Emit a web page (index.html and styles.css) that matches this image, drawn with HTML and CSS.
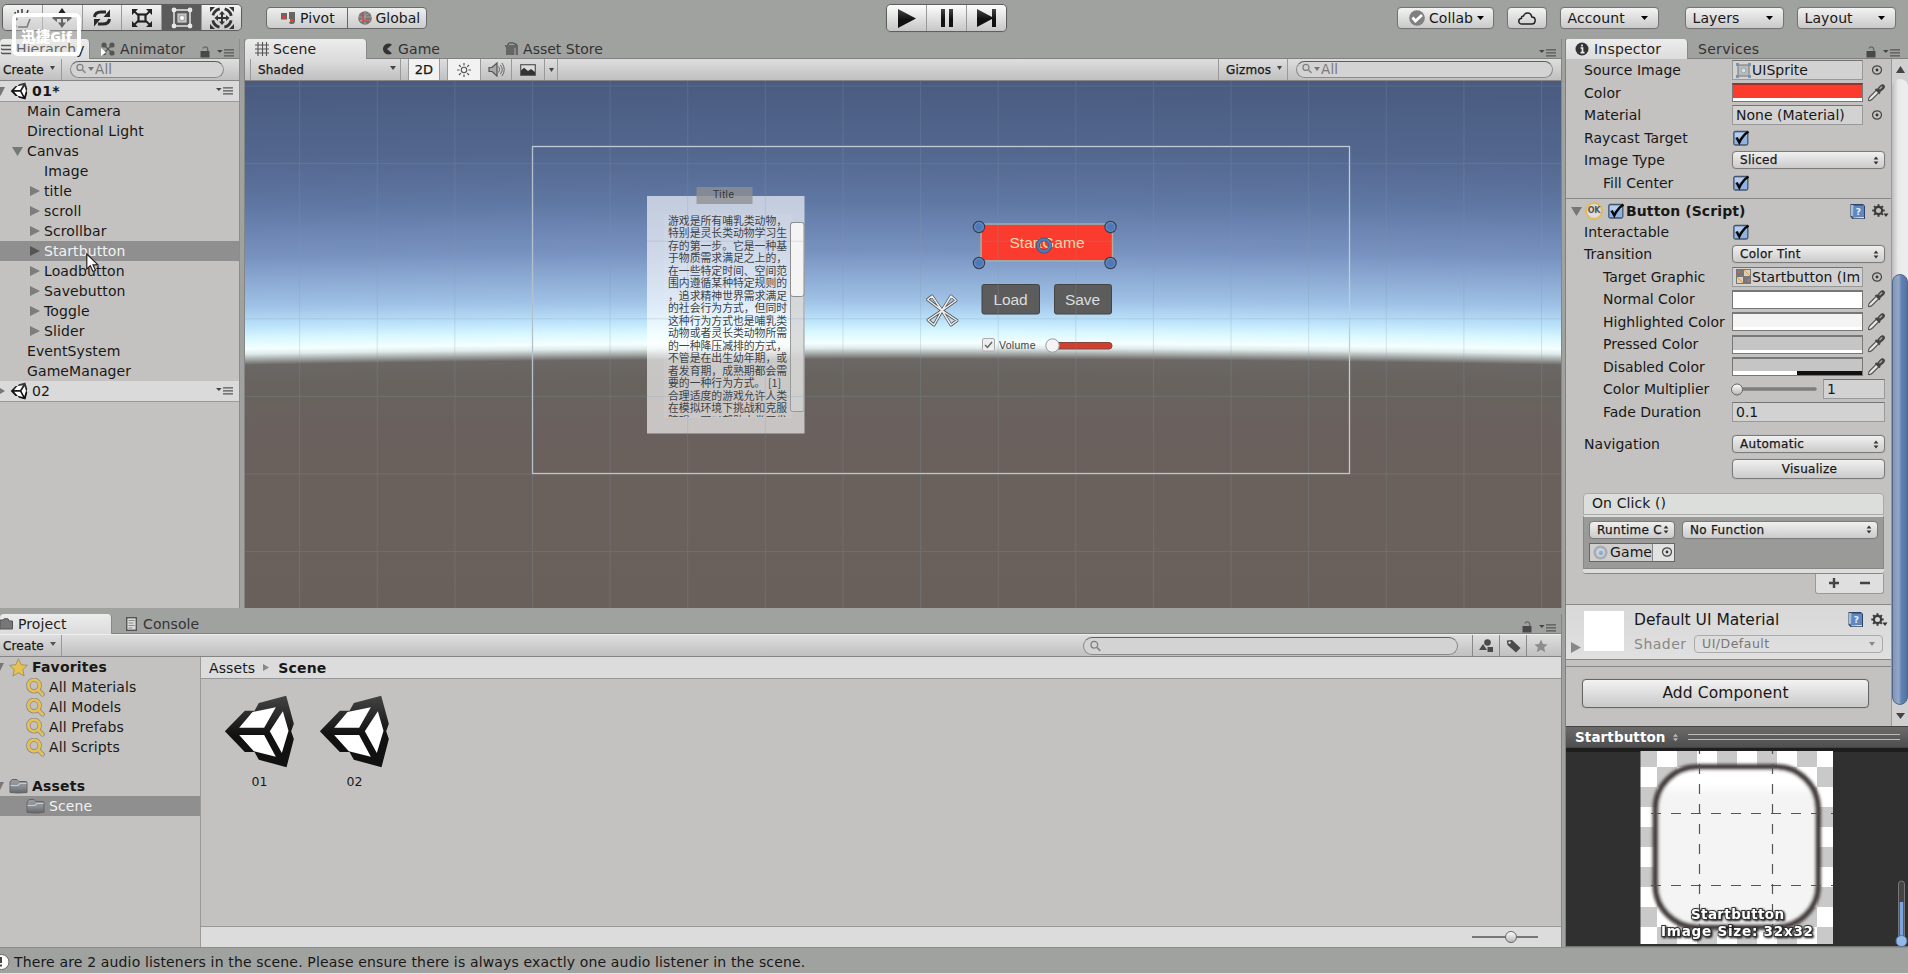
FILE: index.html
```html
<!DOCTYPE html>
<html lang="en">
<head>
<meta charset="utf-8">
<title>Scene editor</title>
<link rel="stylesheet" href="styles.css">
</head>
<body>
<svg class="defs" width="0" height="0">
  <defs>
    <linearGradient id="dark" x1="0" y1="0" x2="0" y2="1"><stop offset="0" stop-color="#444"/><stop offset=".55" stop-color="#111"/></linearGradient>
    <linearGradient id="knob" x1="0" y1="0" x2="0" y2="1"><stop offset="0" stop-color="#fff"/><stop offset="1" stop-color="#b5b5b5"/></linearGradient>
    <linearGradient id="folderfill" x1="0" y1="0" x2="0" y2="1"><stop offset="0" stop-color="#999b9d"/><stop offset=".5" stop-color="#8b9098"/><stop offset="1" stop-color="#666"/></linearGradient>
    <radialGradient id="ball"><stop offset="0" stop-color="#4d78ba"/><stop offset=".6" stop-color="#5279b4"/><stop offset="1" stop-color="#87a7d6"/></radialGradient>
    <symbol id="unity" viewBox="670 298 218 225">
      <path fill="url(#dark)" d="M675 410 735 348H764L777 325 859 303 882 387 874 410 882 433 860 518 777 495 764 472H735Z"/>
      <path fill="#fff" d="M718 399 758 352 828 338 793 399ZM718 421H793L828 486 762 470ZM849 350 866 408 846 475 810 410Z"/>
    </symbol>
    <symbol id="menu" viewBox="0 0 18 8"><path d="M0 1h5.600L2.800 4Z" fill="#444"/><path d="M7 .8h10M7 3.800h10M7 6.800h10" stroke="#555" stroke-width="1.300"/></symbol>
    <symbol id="lock" viewBox="0 0 10 12"><path d="M.5 5h9v6.500h-9Z" fill="#484848"/><path d="M7.700 5V3Q7.300 .8 5.300 .8 3.500 .8 3 2.500" fill="none" stroke="#666" stroke-width="1.300"/></symbol>
    <symbol id="tri" viewBox="0 0 10 10"><path d="M0 0 10 5 0 10Z" fill="currentColor"/></symbol>
    <symbol id="down" viewBox="0 0 10 10"><path d="M0 0H10L5 10Z" fill="currentColor"/></symbol>
    <symbol id="updn" viewBox="0 0 6 9"><path d="M.6 3.600 3 .4 5.400 3.600ZM.6 5.400 3 8.600 5.400 5.400Z" fill="#333"/></symbol>
    <symbol id="target" viewBox="0 0 12 10"><ellipse cx="6" cy="5" rx="4.500" ry="4.200" fill="none" stroke="#444" stroke-width="1.200"/><circle cx="6" cy="5" r="1.400" fill="#333"/></symbol>
    <symbol id="drop" viewBox="0 0 18 18"><path d="M1.500 16.500Q1 14.500 3 12.500L9.500 6 12 8.500 5.500 15Q3.500 17 1.500 16.500Z" fill="#e6e6e6" stroke="#555" stroke-width="1.100"/><path d="M8.500 5 13 9.500M10.500 5.800 13.500 2.300Q15.500 .4 16.700 1.700 17.700 3 16 4.700L12.300 7.800Z" fill="#555" stroke="#444" stroke-width="1.800"/><path d="m12.500 5 2.500-2.500" stroke="#aaa" stroke-width="1.300"/></symbol>
    <symbol id="check" viewBox="0 0 17 16"><rect x=".8" y="1.500" width="14" height="13.500" rx="1.500" fill="#8fb3e2" stroke="#47566e" stroke-width="1.300"/><path d="M2 8V2.800H14V6Z" fill="#b4cdec"/><path d="M3.500 7.500 6.300 12.500Q9.500 5.500 15.500 1.500" fill="none" stroke="#080808" stroke-width="2.500"/></symbol>
    <symbol id="book" viewBox="0 0 17 17"><path d="M1.500 1H14L16 3V16H3.500L1.500 14Z" fill="#2f4464"/><path d="M4 2.500H15V13.500L5 14.500Z" fill="#5f88c0"/><path d="M2 2H4.500V14L2 12.800Z" fill="#a9bdd8"/><path d="m3.500 14.500 11.500-.7v1.500H4.500Z" fill="#ddd"/><text x="9.300" y="11.500" font-family="DejaVu Sans" font-weight="bold" font-size="9" text-anchor="middle" fill="#e8f0fa">?</text></symbol>
    <symbol id="gear" viewBox="0 0 17 14"><circle cx="6.500" cy="6.500" r="3.600" fill="none" stroke="#3b3b3b" stroke-width="2.200"/><path d="M6.500 .3V3M6.500 10V12.700M.3 6.500H3M10 6.500H12.700M2.100 2.100 4 4M9 9 10.900 10.900M2.100 10.900 4 9M9 4 10.900 2.100" stroke="#3b3b3b" stroke-width="2"/><path d="M11.500 9.500h5L14 13Z" fill="#333"/></symbol>
    <symbol id="mag" viewBox="0 0 13 12"><circle cx="4.700" cy="4.700" r="3.600" fill="none" stroke="#7d7d7d" stroke-width="1.400"/><path d="m7.200 7.200 4 4" stroke="#8a8a8a" stroke-width="1.900"/></symbol>
    <symbol id="fav" viewBox="0 0 19 19"><g fill="none" stroke="#8c8c8c" stroke-width="4.400" stroke-linecap="round"><circle cx="8" cy="7.600" r="5.700"/><path d="m12.300 12 4.300 4.400"/></g><g fill="none" stroke="#e8c14f" stroke-width="2.800" stroke-linecap="round"><circle cx="8" cy="7.600" r="5.700"/><path d="m12.300 12 4.300 4.400"/></g></symbol>
    <symbol id="folder" viewBox="0 0 19 16"><path d="M1 14.500V4L3 1.500H8L10 3.500H17Q18 3.500 18 5V14.500Q9 15.500 1 14.500Z" fill="url(#folderfill)" stroke="#656565"/><path d="M1.500 7.500H9L11 5.500H17.500" fill="none" stroke="#c9cdd1" stroke-width="1.100"/></symbol>
    <symbol id="star" viewBox="0 0 20 20"><path d="M10 .8 12.800 7 19.400 7.700 14.500 12.200 15.900 18.900 10 15.500 4.100 18.900 5.500 12.200 .6 7.700 7.200 7Z" fill="currentColor" stroke="#8f8461" stroke-width=".8"/></symbol>
  </defs>
</svg>

<div class="app">
  <header class="topbar">
    <div class="tools">
      <span class="tool"><svg width="22" height="22" viewBox="0 0 22 22" fill="none" stroke="#444" stroke-width="1.600"><path d="M5 20 2 12Q3 9 6 13L4 5M7 10 7 3M11 9V2M15 10 17 3M19 12 16 20H7"/></svg></span>
      <span class="tool"><svg width="22" height="22" viewBox="0 0 22 22" fill="#222"><path d="M11 1 15 6.500H7ZM11 21 15 15.500H7ZM1 11 6 7V10H16V7L21 11 16 15V12H6V15Z"/><path d="M10 6h2v10h-2Z"/></svg></span>
      <span class="tool"><svg width="20" height="18" viewBox="0 0 20 18"><path d="M2.500 8Q3 3 9 3H14M17.500 10Q17 15 11 15H6" fill="none" stroke="#292929" stroke-width="3"/><path d="M18 .5V8H11.500ZM2 17.500V10H8.500Z" fill="#292929"/></svg></span>
      <span class="tool"><svg width="22" height="20" viewBox="0 0 22 20"><rect x="7.500" y="6.500" width="7" height="7" fill="none" stroke="#222" stroke-width="2.200"/><path d="M1 1H7L1 7ZM21 1H15L21 7ZM1 19H7L1 13ZM21 19H15L21 13Z" fill="#222"/><path d="m3 3 4 4M19 3l-4 4M3 17l4-4M19 17l-4-4" stroke="#222" stroke-width="1.800"/></svg></span>
      <span class="tool on"><svg width="22" height="22" viewBox="0 0 22 22"><rect x="3" y="3" width="16" height="16" fill="none" stroke="#ddd" stroke-width="1.600"/><rect x="7" y="7" width="8" height="8" fill="#aaa" stroke="#ddd"/><circle cx="11" cy="11" r="2" fill="#fff"/><g fill="#e8e8e8"><circle cx="3" cy="3" r="2.400"/><circle cx="19" cy="3" r="2.400"/><circle cx="3" cy="19" r="2.400"/><circle cx="19" cy="19" r="2.400"/></g></svg></span>
      <span class="tool"><svg width="26" height="24" viewBox="0 0 26 24"><circle cx="13" cy="12" r="9.500" fill="none" stroke="#333" stroke-width="2.800" stroke-dasharray="9.900 5" stroke-dashoffset="-2.500"/><path d="M13 5 16 8.500H14V11H17V9L20.500 12 17 15V13H14V15.500H16L13 19 10 15.500H12V13H9V15L5.500 12 9 9V11H12V8.500H10Z" fill="#333"/><path d="M1 1H6L1 6ZM25 1H20L25 6ZM1 23H6L1 18ZM25 23H20L25 18Z" fill="#333"/></svg></span>
    </div>
    <div class="group pivot">
      <span class="gbtn"><svg width="14" height="12" viewBox="0 0 14 12"><rect y="1" width="6" height="6.500" fill="#666"/><path d="M8 0h6v9q0 3-3 3-3 0-3-2h3V7H8Z" fill="#666"/><circle cx="3" cy="5" r="1.800" fill="#e33"/><path d="M9 7h3v3H9Z" fill="#d43"/></svg>Pivot</span>
      <span class="gbtn"><svg width="14" height="14" viewBox="0 0 14 14"><circle cx="7" cy="7" r="6.800" fill="#777"/><path d="M3 11Q4 5 11 2.500M1 6h12M7 1v12M2 9.500h10" fill="none" stroke="#aaa" stroke-width=".8"/><path d="M5 3v7h6" fill="none" stroke="#d44" stroke-width="1.500"/></svg>Global</span>
    </div>
    <div class="play">
      <span><svg width="19" height="19" viewBox="0 0 19 19"><path d="M1 0 19 9.500 1 19Z" fill="url(#dark)"/></svg></span>
      <span><svg width="12" height="18" viewBox="0 0 12 18"><path d="M0 0h4v18H0ZM8 0h4v18H8Z" fill="url(#dark)"/></svg></span>
      <span><svg width="19" height="18" viewBox="0 0 19 18"><path d="M0 0 15 8V0h4v18h-4V10L0 18Z" fill="url(#dark)"/></svg></span>
    </div>
    <div class="topright">
      <span class="tb collab"><svg width="16" height="16" viewBox="0 0 16 16"><circle cx="8" cy="8" r="7.800" fill="#808080"/><path d="m3.500 7.500 3 3.500 6.500-6" fill="none" stroke="#fff" stroke-width="2.700"/></svg>Collab<svg class="dn" width="7" height="4"><path d="M0 0H7L3.500 4Z"/></svg></span>
      <span class="tb cloud"><svg width="18" height="13" viewBox="0 0 18 13"><path d="M4 12Q.8 12 .8 9.200.8 6.800 3.500 6.300 3.300 4 5.500 4 6.500 1 9.800 1 13 1 13.800 5 17.200 5 17.200 8.500 17 12 14 12Z" fill="none" stroke="#222" stroke-width="1.500"/></svg></span>
      <span class="tb wide">Account<svg class="dn" width="7" height="4"><path d="M0 0H7L3.500 4Z"/></svg></span>
      <span class="tb wide lay">Layers<svg class="dn" width="7" height="4"><path d="M0 0H7L3.500 4Z"/></svg></span>
      <span class="tb wide">Layout<svg class="dn" width="7" height="4"><path d="M0 0H7L3.500 4Z"/></svg></span>
    </div>
  </header>

  <div class="work">
    <div class="main">
      <div class="upper">
        <section class="hier">
          <div class="tabs">
            <span class="tab act t-hier"><svg width="11" height="11" viewBox="0 0 11 11"><path d="M1 1.500h10M2 5.500h9M2 9.500h9M1 5h1M1 9h1" stroke="#555" stroke-width="1.500"/></svg>Hierarchy</span>
            <span class="tab t-anim"><svg width="14" height="14" viewBox="0 0 14 14" fill="#555"><circle cx="3" cy="3" r="2.600"/><circle cx="11" cy="3" r="2.600"/><circle cx="11" cy="11" r="2.600"/><circle cx="3" cy="11" r="2.300"/><path d="m4 4 7 7M11 3 4 10" stroke="#555" stroke-width="1.300"/><path d="M0 6 5 10.500 0 14Z" fill="#fff"/></svg>Animator</span>
            <svg class="lk" width="10" height="12"><use href="#lock"/></svg><svg class="mn" width="18" height="8"><use href="#menu"/></svg>
          </div>
          <div class="bar">
            <span class="create">Create<svg width="5" height="4"><path d="M0 0H5L2.500 4Z" fill="#444"/></svg></span>
            <span class="search"><svg width="11" height="11"><use href="#mag"/></svg><svg width="6" height="4"><path d="M0 0H6L3 4Z" fill="#777"/></svg>All</span>
          </div>
          <div class="scenehead"><svg class="fold" width="9" height="9"><use href="#down" width="9" height="9"/></svg><svg width="18" height="18"><use href="#unity"/></svg><b>01*</b><svg class="mn2" width="18" height="8"><use href="#menu"/></svg></div>
          <div class="tree">
            <div class="row">Main Camera</div>
            <div class="row">Directional Light</div>
            <div class="row"><svg class="c" width="11" height="9"><path d="M0 0H11L5.500 9Z" fill="#777"/></svg>Canvas</div>
            <div class="row in">Image</div>
            <div class="row in"><svg class="a" width="10" height="10"><use href="#tri"/></svg>title</div>
            <div class="row in"><svg class="a" width="10" height="10"><use href="#tri"/></svg>scroll</div>
            <div class="row in"><svg class="a" width="10" height="10"><use href="#tri"/></svg>Scrollbar</div>
            <div class="row in sel"><svg class="a" width="10" height="10"><use href="#tri"/></svg>Startbutton</div>
            <div class="row in"><svg class="a" width="10" height="10"><use href="#tri"/></svg>Loadbutton</div>
            <div class="row in"><svg class="a" width="10" height="10"><use href="#tri"/></svg>Savebutton</div>
            <div class="row in"><svg class="a" width="10" height="10"><use href="#tri"/></svg>Toggle</div>
            <div class="row in"><svg class="a" width="10" height="10"><use href="#tri"/></svg>Slider</div>
            <div class="row">EventSystem</div>
            <div class="row">GameManager</div>
          </div>
          <div class="scenehead two"><svg class="fold" width="5" height="6"><path d="M0 0 5 3 0 6Z" fill="#777"/></svg><svg width="18" height="18"><use href="#unity"/></svg><span>02</span><svg class="mn2" width="18" height="8"><use href="#menu"/></svg></div>
        </section>

        <section class="scene">
          <div class="tabs">
            <span class="tab act t-scene"><svg width="14" height="14" viewBox="0 0 14 14"><path d="M3 0v14M7.500 0v14M11.500 0v14M0 3h14M0 7h14M0 11h14" stroke="#555" stroke-width="1.100"/></svg>Scene</span>
            <span class="tab t-game"><svg width="12" height="12" viewBox="0 0 12 12"><path d="M11 1.800 6 6 11 10.200A5.500 5.500 0 1 1 11 1.800Z" fill="#333"/></svg>Game</span>
            <span class="tab t-store"><svg width="14" height="14" viewBox="0 0 14 14"><path d="M1 5H13V13H1ZM0 3h13v2H0Z" fill="#666"/><path d="M10 6v7" stroke="#aaa"/><path d="M3 3q0-2.500 3-2 2-.5 4 1l2 1" fill="none" stroke="#555" stroke-width="1.400"/></svg>Asset Store</span>
            <svg class="mn" width="18" height="8"><use href="#menu"/></svg>
          </div>
          <div class="bar">
            <span class="shaded">Shaded<svg width="6" height="4"><path d="M0 0H6L3 4Z" fill="#444"/></svg></span>
            <span class="cell twod">2D</span>
            <span class="cell sun"><svg width="16" height="14" viewBox="0 0 16 14"><circle cx="8" cy="7" r="2.700" fill="none" stroke="#555" stroke-width="1.100"/><path d="M8 0v2.500M8 11.500V14M1 7h2.500M12.500 7H15M3 2l1.800 1.800M13 2l-1.800 1.800M3 12l1.800-1.800M13 12l-1.800-1.800" stroke="#555" stroke-width="1.200"/></svg></span>
            <span class="cell spk"><svg width="17" height="15" viewBox="0 0 17 15"><path d="M1 5.500h3L9 1v13L4 9.500H1Z" fill="#aaa" stroke="#555" stroke-width="1.200"/><path d="M10.500 4.500q2.500 3 0 6M12.300 3q4 4.500 0 9M14 1q4.500 6.500 0 13" fill="none" stroke="#666"/></svg></span>
            <span class="cell pic"><svg width="16" height="12" viewBox="0 0 16 12"><rect x=".7" y=".7" width="14.600" height="10.600" fill="#ddd" stroke="#555" stroke-width="1.200"/><path d="M1 11V6.500L4 3.800 8 7 11 5 15 8V11Z" fill="#333"/></svg></span>
            <span class="cell pdn"><svg width="5" height="4"><path d="M0 0H5L2.500 4Z" fill="#444"/></svg></span>
            <span class="giz">Gizmos<svg width="5" height="4"><path d="M0 0H5L2.500 4Z" fill="#444"/></svg></span>
            <span class="search big"><svg width="11" height="11"><use href="#mag"/></svg><svg width="6" height="4"><path d="M0 0H6L3 4Z" fill="#777"/></svg>All</span>
          </div>
          <div class="view">
          <svg width="1317" height="527" viewBox="245 81 1317 527">
            <defs><clipPath id="clip"><rect x="660" y="200" width="130" height="217"/></clipPath>
            <pattern id="grid" x="299.100" y="85.500" width="77.620" height="77.600" patternUnits="userSpaceOnUse"><path d="M.5 0V77.600M0 .5H77.620" stroke="#8098a8" stroke-opacity=".25" stroke-width="1"/></pattern></defs>
            <rect x="532.500" y="146.500" width="817" height="327" fill="none" stroke="#c3ccd6" stroke-width="1.300"/>
            <rect x="647" y="196" width="157.500" height="237.500" fill="#fff" fill-opacity=".63"/>
            <rect x="664" y="214" width="129" height="204" fill="#fff" fill-opacity=".07"/>
            <rect x="696.500" y="187" width="56" height="17" fill="#8e9092" fill-opacity=".8"/>
            <text x="713" y="197.500" class="ui" font-size="10" fill="#333" textLength="21">Title</text>
            <g clip-path="url(#clip)" class="cjk">
              <text x="668" y="224.500">游戏是所有哺乳类动物，</text>
              <text x="668" y="237">特别是灵长类动物学习生</text>
              <text x="668" y="249.500">存的第一步。它是一种基</text>
              <text x="668" y="262">于物质需求满足之上的，</text>
              <text x="668" y="274.500">在一些特定时间、空间范</text>
              <text x="668" y="287">围内遵循某种特定规则的</text>
              <text x="668" y="299.500">，追求精神世界需求满足</text>
              <text x="668" y="312">的社会行为方式，但同时</text>
              <text x="668" y="324.500">这种行为方式也是哺乳类</text>
              <text x="668" y="337">动物或者灵长类动物所需</text>
              <text x="668" y="349.500">的一种降压减排的方式，</text>
              <text x="668" y="362">不管是在出生幼年期，或</text>
              <text x="668" y="374.500">者发育期，成熟期都会需</text>
              <text x="668" y="387">要的一种行为方式。 [1]</text>
              <text x="668" y="399.500">合理适度的游戏允许人类</text>
              <text x="668" y="412">在模拟环境下挑战和克服</text>
              <text x="668" y="424.500">障碍，可以帮助人类开发</text>
            </g>
            <rect x="790.500" y="222.500" width="13.500" height="189" rx="2" fill="#d2d2d2" fill-opacity=".75" stroke="#999"/>
            <rect x="790.500" y="222.500" width="13.500" height="74" rx="2.500" fill="#f4f4f4" stroke="#8d8d8d"/>
            <rect x="982" y="225" width="130" height="35" fill="#fa3b2e"/>
            <rect x="981" y="224" width="131.500" height="37" fill="none" stroke="#b5aa9c" stroke-width="1.400"/>
            <text x="1009.500" y="248" class="ui" font-size="15.500" fill="#f3dcb0" textLength="75">StartGame</text>
            <g fill="#5c5c5c" stroke="#444"><rect x="982" y="284.500" width="57.500" height="29.500" rx="2"/><rect x="1054.500" y="284.500" width="57" height="29.500" rx="2"/></g>
            <text x="993.500" y="305" class="ui" font-size="15.500" fill="#ddd" textLength="34">Load</text>
            <text x="1065" y="305" class="ui" font-size="15.500" fill="#ddd" textLength="35">Save</text>
            <rect x="982.500" y="338.500" width="12" height="12.500" rx="1.500" fill="#eee" stroke="#aaa"/>
            <path d="m985 345 2.500 2.500 4.500-5.500" fill="none" stroke="#666" stroke-width="1.500"/>
            <text x="999" y="348.500" class="ui" font-size="10.500" fill="#444" textLength="36.500">Volume</text>
            <rect x="1050" y="342.500" width="62" height="6.500" rx="3" fill="#d0402f" stroke="#84453c"/>
            <circle cx="1052.500" cy="345.500" r="6.700" fill="#f4f4f4" stroke="#999"/>
            <rect x="244" y="80" width="1318" height="528" fill="url(#grid)"/>
            <g stroke="#333d55" stroke-width="1.200" fill="url(#ball)"><circle cx="979" cy="227" r="5.600"/><circle cx="1110.500" cy="227" r="5.600"/><circle cx="979" cy="263" r="5.600"/><circle cx="1110.500" cy="263" r="5.600"/></g>
            <circle cx="1044" cy="245.500" r="6" fill="none" stroke="#41506e" stroke-width="4"/><circle cx="1044" cy="245.500" r="6" fill="none" stroke="#527ab5" stroke-width="2.500"/>
            <g fill="none" stroke-linejoin="round"><path d="M942 310.500 927.500 299.500 932 296ZM942 310.500 951 296 956 300.500ZM942 310.500 957 320.500 951 325ZM942 310.500 934 325 928 320Z" stroke="#555" stroke-width="3"/><path d="M942 310.500 927.500 299.500 932 296ZM942 310.500 951 296 956 300.500ZM942 310.500 957 320.500 951 325ZM942 310.500 934 325 928 320Z" stroke="#eee" stroke-width="1.500"/></g>
          </svg>
          </div>
        </section>
      </div>

      <section class="project">
        <div class="tabs">
          <span class="tab act t-proj"><svg width="13" height="12" viewBox="0 0 13 12"><path d="M0 11V2H3L4 .8H8L9.500 3H12.500V11Z" fill="#777" stroke="#555"/></svg>Project</span>
          <span class="tab t-con"><svg width="11" height="14" viewBox="0 0 11 14"><rect x=".7" y=".7" width="9.600" height="12.600" fill="#ddd" stroke="#555" stroke-width="1.400"/><path d="M2.500 3.500h6M2.500 6h5M2.500 8.500h6M2.500 11h4" stroke="#888"/></svg>Console</span>
          <svg class="lk" width="10" height="12"><use href="#lock"/></svg><svg class="mn" width="18" height="8"><use href="#menu"/></svg>
        </div>
        <div class="bar pbar">
          <span class="create">Create<svg width="6" height="4"><path d="M0 0H6L3 4Z" fill="#555"/></svg></span>
          <span class="search psearch"><svg width="12" height="12"><use href="#mag"/></svg></span>
          <span class="ic"><svg width="15" height="14" viewBox="0 0 15 14" fill="#4a4a4a"><circle cx="8.500" cy="3.500" r="3.300"/><path d="M4 5 8 11H0ZM8.500 8H14V13H8.500Z"/></svg></span>
          <span class="ic"><svg width="15" height="14" viewBox="0 0 15 14"><path d="M.8 1.500 6 1 14.500 9 10 13.500 1.500 6Z" fill="#4a4a4a"/><circle cx="3.600" cy="3.600" r="1.200" fill="#ddd"/></svg></span>
          <span class="ic st"><svg width="14" height="14" viewBox="0 0 20 20"><path d="M10 .8 12.800 7 19.400 7.700 14.500 12.200 15.900 18.900 10 15.500 4.100 18.900 5.500 12.200 .6 7.700 7.200 7Z" fill="#8d8d8d"/></svg></span>
        </div>
        <div class="pbody">
          <aside class="ptree">
            <div class="prow b"><svg class="pf" width="9" height="9"><use href="#down" width="9" height="9"/></svg><svg class="i1" style="color:#e6c350" width="19" height="19"><use href="#star"/></svg>Favorites</div>
            <div class="prow s"><svg width="19" height="19"><use href="#fav"/></svg>All Materials</div>
            <div class="prow s"><svg width="19" height="19"><use href="#fav"/></svg>All Models</div>
            <div class="prow s"><svg width="19" height="19"><use href="#fav"/></svg>All Prefabs</div>
            <div class="prow s"><svg width="19" height="19"><use href="#fav"/></svg>All Scripts</div>
            <div class="prow b as"><svg class="pf" width="9" height="9"><use href="#down" width="9" height="9"/></svg><svg class="i1" width="19" height="16"><use href="#folder"/></svg>Assets</div>
            <div class="prow s sel"><svg width="19" height="16"><use href="#folder"/></svg>Scene</div>
          </aside>
          <div class="pmain">
            <div class="crumb">Assets<svg width="6" height="7"><path d="M0 0 6 3.500 0 7Z" fill="#888"/></svg><b>Scene</b></div>
            <div class="files">
              <div class="file"><svg width="73" height="75" viewBox="0 0 73 75"><use href="#unity"/></svg>01</div>
              <div class="file"><svg width="73" height="75" viewBox="0 0 73 75"><use href="#unity"/></svg>02</div>
            </div>
            <div class="pfoot"><svg width="72" height="16"><path d="M2 8h66" stroke="#777" stroke-width="2"/><circle cx="41" cy="8" r="5.500" fill="url(#knob)" stroke="#666"/></svg></div>
          </div>
        </div>
      </section>
    </div>

    <aside class="insp">
      <div class="tabs">
        <span class="tab act t-insp"><svg width="14" height="14" viewBox="0 0 14 14"><circle cx="7" cy="7" r="6.500" fill="#333"/><path d="M7 2.500v2M5.500 6H7.500V10.500M5.500 10.700h4" stroke="#eee" stroke-width="1.700" fill="none"/></svg>Inspector</span>
        <span class="tab t-serv">Services</span>
        <svg class="lk" width="10" height="12"><use href="#lock"/></svg><svg class="mn" width="18" height="8"><use href="#menu"/></svg>
      </div>
      <div class="ibody">
        <div class="props">
          <div class="p"><label>Source Image</label><span class="field"><svg width="15" height="15" viewBox="0 0 15 15"><rect x="2" y="2" width="11" height="11" fill="#bbb" stroke="#777"/><circle cx="7.500" cy="7.500" r="2.500" fill="#ddd" stroke="#8ab"/><path d="M0 0h3v3H0ZM12 0h3v3h-3ZM0 12h3v3H0ZM12 12h3v3h-3Z" fill="#7394bb"/></svg>UISprite</span><svg class="tg" width="12" height="10"><use href="#target"/></svg></div>
          <div class="p"><label>Color</label><span class="col red"><i></i></span><svg class="dr" width="18" height="18"><use href="#drop"/></svg></div>
          <div class="p"><label>Material</label><span class="field">None (Material)</span><svg class="tg" width="12" height="10"><use href="#target"/></svg></div>
          <div class="p"><label>Raycast Target</label><svg class="ck" width="17" height="16"><use href="#check"/></svg></div>
          <div class="p"><label>Image Type</label><span class="pop">Sliced<svg width="6" height="9"><use href="#updn"/></svg></span></div>
          <div class="p sub"><label>Fill Center</label><svg class="ck" width="17" height="16"><use href="#check"/></svg></div>
          <div class="comp"><svg class="cf" width="11" height="9"><path d="M0 0H11L5.500 9Z" fill="#777"/></svg><span class="ok">OK</span><svg width="17" height="16"><use href="#check"/></svg><b>Button (Script)</b><svg class="bk" width="17" height="17"><use href="#book"/></svg><svg class="gr" width="17" height="14"><use href="#gear"/></svg></div>
          <div class="p"><label>Interactable</label><svg class="ck" width="17" height="16"><use href="#check"/></svg></div>
          <div class="p"><label>Transition</label><span class="pop">Color Tint<svg width="6" height="9"><use href="#updn"/></svg></span></div>
          <div class="p sub"><label>Target Graphic</label><span class="field"><svg width="15" height="15" viewBox="0 0 15 15"><rect width="15" height="15" fill="#777"/><path d="M8 1h6v6H8ZM1 8h6v6H1Z" fill="#d8d0c4"/><path d="m1 8 6 6M8 1l6 6" stroke="#dda23c"/><path d="M11 10h3v3h-3ZM2 2h2v2H2Z" fill="#c66"/></svg>Startbutton (Im</span><svg class="tg" width="12" height="10"><use href="#target"/></svg></div>
          <div class="p sub"><label>Normal Color</label><span class="col c1"><i></i></span><svg class="dr" width="18" height="18"><use href="#drop"/></svg></div>
          <div class="p sub"><label>Highlighted Color</label><span class="col c2"><i></i></span><svg class="dr" width="18" height="18"><use href="#drop"/></svg></div>
          <div class="p sub"><label>Pressed Color</label><span class="col c3"><i></i></span><svg class="dr" width="18" height="18"><use href="#drop"/></svg></div>
          <div class="p sub"><label>Disabled Color</label><span class="col c3 half"><i></i></span><svg class="dr" width="18" height="18"><use href="#drop"/></svg></div>
          <div class="p sub"><label>Color Multiplier</label><svg class="sl" width="87" height="14"><path d="M3 7h82" stroke="#7d7d7d" stroke-width="3.500" stroke-linecap="round"/><circle cx="7" cy="7.500" r="5.500" fill="url(#knob)" stroke="#666"/></svg><span class="field num">1</span></div>
          <div class="p sub"><label>Fade Duration</label><span class="field full">0.1</span></div>
          <div class="p nav"><label>Navigation</label><span class="pop">Automatic<svg width="6" height="9"><use href="#updn"/></svg></span></div>
          <div class="p vis"><span class="pop ctr">Visualize</span></div>
          <div class="event">
            <div class="eh">On Click ()</div>
            <div class="eb">
              <div class="er"><span class="pop rt">Runtime C<svg width="6" height="9"><use href="#updn"/></svg></span><span class="pop nf">No Function<svg width="6" height="9"><use href="#updn"/></svg></span></div>
              <div class="er"><span class="obj"><span><svg width="15" height="15" viewBox="0 0 15 15"><circle cx="7.500" cy="7.500" r="7" fill="#a9acaf"/><circle cx="7.500" cy="7.500" r="4.500" fill="#c7d3dd"/><circle cx="8" cy="8" r="2.200" fill="#93aec4"/></svg>Game</span><svg class="tg2" width="12" height="10"><use href="#target"/></svg></span></div>
            </div>
            <div class="ef"></div>
            <div class="pm"><svg width="40" height="12"><path d="M1 6h10M6 1v10M32 6h10" stroke="#444" stroke-width="2.400"/></svg></div>
          </div>
          <div class="mat">
            <svg class="mf" width="10" height="11"><path d="M0 0 10 5.500 0 11Z" fill="#888"/></svg><span class="thumb"></span>
            <div class="mi"><div class="mt"><span>Default UI Material</span><svg width="17" height="17"><use href="#book"/></svg><svg class="gr" width="17" height="14"><use href="#gear"/></svg></div>
            <div class="ms">Shader<span>UI/Default<svg width="6" height="4"><path d="M0 0H6L3 4Z" fill="#888"/></svg></span></div></div>
          </div>
          <div class="add">Add Component</div>
        </div>
        <div class="sbar"><svg width="9" height="7"><path d="M4.500 0 9 7H0Z" fill="#444"/></svg><span class="trough"><i></i></span><svg width="9" height="6"><path d="M0 0H9L4.500 6Z" fill="#444"/></svg></div>
      </div>
      <div class="preh"><b>Startbutton</b><svg width="5" height="9" viewBox="0 0 6 9"><path d="M0 3.500 3 0 6 3.500ZM0 5.500 3 9 6 5.500Z" fill="#bbb"/></svg><i></i></div>
      <div class="preb">
        <svg width="342" height="199" viewBox="1566 749 342 199">
          <defs><pattern id="chk" x="1637" y="768" width="40" height="40" patternUnits="userSpaceOnUse"><rect width="40" height="40" fill="#fff"/><path d="M0 20H20V40H0ZM20 0H40V20H20Z" fill="#c9c9c9"/></pattern><filter id="bl" x="-10%" y="-10%" width="120%" height="120%"><feGaussianBlur stdDeviation="1.800"/></filter><linearGradient id="face" x1="0" y1="0" x2="0" y2="1"><stop offset="0" stop-color="#fff"/><stop offset=".1" stop-color="#fff"/><stop offset=".18" stop-color="#f4f4f4"/></linearGradient></defs>
          <rect x="1565" y="748" width="343" height="5" fill="#1e1e1e"/>
          <rect x="1640.500" y="752" width="192.500" height="193" fill="url(#chk)"/>
          <rect x="1655.500" y="768" width="162.500" height="160" rx="42" fill="url(#face)" stroke="#463d3d" stroke-width="6" filter="url(#bl)"/>
          <path d="M1699.500 752V930M1772.500 752V930" stroke="#555" stroke-width="1.200" stroke-dasharray="10 10" stroke-dashoffset="7"/>
          <path d="M1651 814.500H1833M1651 886.500H1833" stroke="#555" stroke-width="1.200" stroke-dasharray="10 10"/>
          <g class="cap"><text x="1691" y="920" textLength="93">Startbutton</text><text x="1661" y="936.500" textLength="152">Image Size: 32x32</text></g>
          <rect x="1898.500" y="882" width="6" height="60" rx="3" fill="#444" stroke="#777"/><path d="M1901.500 903v36" stroke="#7ba5df" stroke-width="3.500"/><circle cx="1901.500" cy="942" r="5.500" fill="#93b9ea" stroke="#54729e"/>
        </svg>
      </div>
    </aside>
  </div>
  <footer class="status"><svg width="10" height="16" viewBox="6 0 10 16"><circle cx="7.500" cy="8" r="7.500" fill="#fff" stroke="#666"/><path d="M7 3v6M7 10.500v2" stroke="#444" stroke-width="2"/></svg>There are 2 audio listeners in the scene. Please ensure there is always exactly one audio listener in the scene.</footer>
  <div class="mark">迅捷Gif</div>
  <svg class="cursor" width="14" height="20" viewBox="0 0 14 20"><path d="M.8 1V16L4.300 12.800 7 18.500 9.500 17.300 7 11.800H12Z" fill="#fff" stroke="#222" stroke-width="1.200"/></svg>
</div>
</body>
</html>
```

FILE: styles.css
```css
* { box-sizing: border-box; }
body { margin: 0; font: 14px/20px "DejaVu Sans", "Noto Sans CJK SC", sans-serif; color: #181818; background: #a0a2a0; letter-spacing: .1px; }
svg { display: block; flex: none; }
i { font-style: normal; }
.defs { position: absolute; }
.app { position: relative; width: 1908px; height: 974px; overflow: hidden; display: flex; flex-direction: column; white-space: nowrap; }

/* top toolbar */
.topbar { height: 39px; flex: none; display: flex; align-items: flex-start; }
.tools, .play { display: flex; border: 1px solid #5e5e5e; border-radius: 5px; overflow: hidden; box-shadow: 0 0 1px #777; }
.tools { width: 240px; height: 27px; margin: 4px 0 0 2px; }
.tool { flex: 1; display: flex; align-items: center; justify-content: center; background: linear-gradient(#f4f4f4, #c8c8c8); border-right: 1px solid #999; }
.tool:last-child { border: 0; }
.tool.on { background: #5b5b5b; }
.group { display: flex; height: 22px; margin-top: 7px; border: 1px solid #6a6a6a; border-radius: 4px; background: linear-gradient(#eee, #ccc); }
.pivot { width: 161px; margin-left: 24px; }
.gbtn { display: flex; align-items: center; gap: 5px; padding-left: 14px; width: 81px; border-right: 1px solid #666; }
.gbtn + .gbtn { width: 79px; padding-left: 10px; gap: 4px; border: 0; letter-spacing: 0; }
.play { width: 121px; height: 28px; margin: 4px 0 0 459px; }
.play span { flex: 1; display: flex; align-items: center; justify-content: center; background: linear-gradient(#fdfdfd, #c6c6c6); border-right: 1px solid #999; }
.play span:last-child { border: 0; }
.topright { display: flex; margin: 7px 0 0 390px; }
.tb { height: 22px; border: 1px solid #747474; border-radius: 4px; background: linear-gradient(#f3f3f3, #c9c9c9); display: flex; align-items: center; justify-content: space-between; box-shadow: 0 0 1px #888; }
.collab { width: 97px; padding: 0 9px 0 11px; }
.cloud { width: 40px; margin: 0 12.500px 0 13px; justify-content: center; }
.wide { width: 99px; padding: 0 10px 0 7px; }
.wide.lay { margin: 0 13px 0 26px; }

/* layout */
.work { display: flex; height: 908px; flex: none; }
.main { width: 1562px; margin-right: 3px; display: flex; flex-direction: column; }
.upper { display: flex; height: 569px; margin-bottom: 6px; gap: 4px; }
.hier { width: 240px; background: #c3c2c0; border-right: 1px solid #8c8c8c; }
.scene { width: 1318px; border-right: 1px solid #858585; border-left: 1px solid #858585; background: #6a605b; }
.hier, .scene, .project, .insp { overflow: hidden; display: flex; flex-direction: column; }

/* tabs */
.tabs { height: 20px; flex: none; display: flex; background: #a0a2a0; border-bottom: 1px solid #818181; margin: 0 -1px; padding: 0 1px; }
.tab { display: flex; align-items: center; color: #333; gap: 5px; height: 20px; }
.tab.act { background: linear-gradient(#ececec, #dcdcdc); border-radius: 4px 4px 0 0; border-right: 1px solid #888; color: #222; }
.t-hier { width: 90px; }
.t-anim { margin-left: 11px; }
.t-scene { width: 122px; padding-left: 10px; gap: 4px; }
.t-game { margin-left: 14px; }
.t-store { margin-left: 65px; gap: 4px; letter-spacing: 0; }
.t-proj { width: 112px; }
.t-con { margin-left: 14px; gap: 6px; }
.t-insp { width: 123px; padding-left: 10px; gap: 5px; letter-spacing: .2px; }
.t-serv { margin-left: 10px; letter-spacing: .3px; }
.lk { margin: 7px 7px 0 auto; }
.mn { margin: 10px 4px 0 0; }
.scene .mn { margin-left: auto; }
.bar { height: 22px; flex: none; display: flex; align-items: center; background: linear-gradient(#dedede, #c0c0c0); border-bottom: 1px solid #858585; font-size: 12px; -webkit-text-stroke: .25px; letter-spacing: .15px; }
.bar > span { height: 21px; display: flex; align-items: center; }
.create { width: 62px; padding-left: 3px; gap: 6px; border-right: 1px solid #999; }
.create svg, .giz svg, .shaded svg { margin-top: -4px; }
.bar > .search { width: 154px; height: 17px; margin-left: 8px; padding: 0 0 2px 5px; gap: 1px; border: 1px solid #8a8a8a; border-top-color: #5e5e5e; border-radius: 9px; background: #d3d3d3; font-size: 13.500px; color: #7a7a7a; -webkit-text-stroke: 0; }

/* hierarchy */
.scenehead { height: 21px; flex: none; display: flex; align-items: center; background: #dadada; border-bottom: 1px solid #999; gap: 4px; }
.scenehead .fold { color: #777; margin-left: -4px; margin-right: 1px; }
.scenehead b { letter-spacing: .4px; }
.mn2 { margin: 0 5px 0 auto; }
.two .fold { margin: 0 1px 0 0; }
.tree { margin-top: -1px; }
.row { height: 20px; padding-left: 27px; position: relative; display: flex; align-items: center; }
.row.in { padding-left: 44px; }
.row .a { margin: 0 4px 0 -14px; color: #7c7c7c; }
.row .c { margin: 0 4px 0 -15px; }
.sel { background: #8f8f8f; color: #f2f2f2; }
.row.sel .a { color: #555; }

/* scene view */
.shaded { width: 151px; margin-left: 5px; padding: 0 4px 0 7px; justify-content: space-between; border: solid #999; border-width: 0 1px; }
.cell { justify-content: center; }
.twod { width: 32px; margin-left: 7px; background: #f2f2f2; border: solid #999; border-width: 0 1px; font-size: 13px; }
.sun { width: 33px; margin-left: 7px; background: #f2f2f2; border-left: 1px solid #999; }
.spk { width: 32px; border: solid #999; border-width: 0 1px; }
.pic { width: 32px; }
.pdn { width: 14px; border: solid #999; border-width: 0 1px; }
.giz { margin-left: auto; width: 70px; padding-left: 7px; gap: 6px; border: solid #999; border-width: 0 1px; }
.bar > .search.big { width: 257px; margin: 0 8px 0 8px; }
.view { flex: 1; background: radial-gradient(circle at 658px 36275px, #6a605b 35748px, #6a605d 35920px, #68635e 35978px, #6b6765 35997px, #9fa4a2 36002px, #dfeaea 36008px, #f4ffff 36013px, #d8f7ff 36024px, #bbe2fa 36036px, #a0c2e6 36055px, #7892c0 36105px, #5f77a3 36155px, #53678e 36205px, #4a5b80 36275px); }
.ui { font-family: "Liberation Sans", Arial, sans-serif; letter-spacing: 0; }
.cjk { font: 10.840px "Noto Sans CJK SC", sans-serif; fill: #3c4248; letter-spacing: 0; }

/* project */
.project { height: 333px; background: #c3c2c0; border-right: 1px solid #858585; }
.project .tabs { height: 20px; }
.pbar { height: 23px; border-top: 1px solid #eee; }
.bar > .psearch { width: 375px; height: 18px; margin: 0 14px 0 auto; padding: 0 0 0 6px; }
.ic { width: 27px; justify-content: center; border-left: 1px solid #888; }
.ic.st { width: 35px; padding-right: 7px; }
.pbody { display: flex; flex: 1; }
.ptree { width: 201px; border-right: 1px solid #999; }
.prow { height: 20px; display: flex; align-items: center; gap: 4px; }
.prow.b { font-weight: bold; letter-spacing: .2px; }
.prow.s { padding-left: 26px; }
.pf { margin-left: -5px; color: #777; }
.i1 { margin-left: 1px; }
.as { margin-top: 19px; }
.pmain { flex: 1; display: flex; flex-direction: column; }
.crumb { height: 22px; display: flex; align-items: center; gap: 8px; background: #dcdcdc; border-bottom: 1px solid #999; padding-left: 8px; }
.crumb b { letter-spacing: .2px; margin-left: 1px; }
.files { flex: 1; display: flex; gap: 22px; padding: 15px 0 0 22px; font-size: 12.500px; }
.file { display: flex; flex-direction: column; align-items: center; }
.file svg { margin-bottom: 3px; }
.pfoot { height: 21px; background: #dcdcdc; border-top: 1px solid #999; display: flex; align-items: center; justify-content: flex-end; padding-right: 19px; }

/* inspector */
.insp { width: 343px; background: #c3c2c0; border-left: 1px solid #818181; }
.insp .tabs { padding-left: 0; }
.insp .mn { margin-right: 7px; }
.ibody { display: flex; height: 667px; flex: none; }
.props { width: 325px; overflow: hidden; }
.p { height: 22.500px; display: flex; align-items: center; padding-left: 18px; }
.p label { width: 148px; letter-spacing: .05px; }
.p.sub { padding-left: 37px; }
.p.sub label { width: 129px; letter-spacing: 0; }
.field { width: 131px; height: 20px; border: 1px solid #999; border-top-color: #737373; background: #d2d2d2; display: flex; align-items: center; padding-left: 3px; gap: 1px; overflow: hidden; letter-spacing: 0; }
.tg { margin-left: 8px; }
.dr { margin-left: 4px; }
.ck { margin-left: 1px; }
.col { width: 131px; height: 19px; border: 1px solid #777; border-width: 2px 1px 1px; display: flex; align-items: flex-end; background: #fff; }
.col i { width: 100%; height: 3px; background: #fff; }
.red { background: #fa3b2e; border-top-color: #96342b; }
.c2 { background: #f4f4f4; }
.c3 { background: #c5c5c5; }
.half i { background: linear-gradient(90deg, #fff 50%, #111 50%); height: 4px; }
.pop { width: 153px; height: 18px; border: 1px solid #7b7b7b; border-radius: 4px; background: linear-gradient(#f0f0f0, #cbcbcb); font-size: 12px; -webkit-text-stroke: .25px; letter-spacing: .3px; display: flex; align-items: center; justify-content: space-between; padding: 0 5px 0 7px; box-shadow: 0 0 1px #888; line-height: 16px; }
.comp { height: 23px; border-top: 1px solid #888; margin-top: 4px; display: flex; align-items: center; padding: 2px 0 0 5px; }
.comp b { letter-spacing: .1px; margin-left: 1px; }
.ok { width: 18px; height: 18px; border: 2px solid #e3ba54; border-radius: 50%; font-size: 8px; line-height: 14px; text-align: center; margin: 0 5px 0 3px; color: #555; font-weight: bold; background: #ddd; letter-spacing: -.3px; }
.comp .bk { margin-left: auto; }
.gr { margin: 0 2px 0 6px; }
.comp .gr { margin-right: 2px; }
.comp + .p { margin-top: -.5px; }
.sl { margin-left: -2px; }
.num { width: 62px; margin-left: 6px; }
.full { width: 153px; }
.nav { margin-top: 10px; }
.vis { margin-top: 2.500px; padding-left: 166px; }
.pop.ctr { justify-content: center; height: 20px; }
.event { width: 301px; margin: 12px 0 0 17px; }
.eh { height: 22px; border: 1px solid #aaa; border-radius: 4px 4px 0 0; background: #dcdedc; padding-left: 8px; line-height: 19px; }
.eb { height: 54px; border: 1px solid #888; border-top: 2px solid #ddd; background: #9a9a98; padding: 4px 5px; }
.er { display: flex; gap: 7px; height: 22px; }
.pop.rt { width: 86px; }
.pop.nf { width: 196px; }
.obj { width: 86px; height: 19px; border: 1px solid #666; background: #e2e2e2; display: flex; align-items: center; justify-content: space-between; }
.obj span { display: flex; align-items: center; gap: 2px; padding-left: 3px; width: 63px; background: #cfcfcf; height: 17px; border-right: 1px solid #888; }
.tg2 { margin-right: 1px; }
.ef { height: 5px; background: #ddd; border-bottom: 1px solid #888; border-radius: 0 0 3px 3px; }
.pm { width: 69px; height: 20px; margin-left: auto; background: #dfdfdf; border: 1px solid #999; border-top: 0; border-radius: 0 0 3px 3px; display: flex; align-items: center; padding-left: 12px; }
.pm svg { overflow: visible; }
.mat { margin-top: 10px; height: 56px; border: solid #888; border-width: 1px 0; background: linear-gradient(#d8d8d8, #e0e0e0); display: flex; }
.mf { margin: 37px 3px 0 5px; }
.thumb { width: 40px; height: 40px; background: #fff; margin-top: 6px; }
.mi { flex: 1; padding: 4px 0 0 10px; }
.mt { display: flex; align-items: center; height: 22px; font-size: 15.500px; letter-spacing: 0; }
.mt span { flex: 1; }
.mt .gr { margin-right: 3px; margin-left: 7px; }
.ms { display: flex; align-items: center; justify-content: space-between; padding-right: 8px; height: 26px; color: #888; letter-spacing: .5px; }
.ms span { width: 189px; height: 18px; border: 1px solid #aaa; border-radius: 4px; padding: 0 7px; display: flex; align-items: center; justify-content: space-between; font-size: 12.500px; color: #777; }
.add { width: 287px; height: 29px; margin: 19px 0 0 16px; border: 1px solid #656565; border-radius: 4px; background: linear-gradient(#f2f2f2, #c9c9c9); box-shadow: 0 0 1px #777; text-align: center; line-height: 26px; font-size: 15.500px; position: relative; }
.add::before { content: ""; position: absolute; left: -17px; width: 325px; top: -14px; border-top: 1px solid #888; }
.sbar { width: 17px; display: flex; flex-direction: column; align-items: center; padding: 7px 0; justify-content: space-between; background: #d0d0d0; border-left: 1px solid #999; }
.trough { flex: 1; margin: 6px 0 8px; width: 16px; border-radius: 8px; background: linear-gradient(90deg, #bbb, #e9ebea 40%, #eee); display: flex; align-items: flex-end; }
.trough i { width: 16px; height: 431px; border-radius: 8px; border: 1px solid #4f678b; background: linear-gradient(90deg, #8196b5, #93a8c8 40%, #5f82b5 60%, #54759f); }
.preh { height: 22px; flex: none; display: flex; align-items: center; background: linear-gradient(#6d6969, #4f4f4f); border: solid #444; border-width: 1px 0; color: #fff; padding-left: 9px; }
.preh svg { margin: 0 6px 0 7px; }
.preh b { letter-spacing: .1px; font-size: 13.500px; }
.preh i { flex: 1; height: 6px; margin: 0 8px 0 4px; border: solid #bbb; border-width: 1px 0; }
.preb { height: 199px; background: #303030; border-bottom: 1px solid #777; }
.cap { font-weight: bold; font-size: 13.500px; fill: #fff; stroke: #333; stroke-width: 1.800px; paint-order: stroke; letter-spacing: 0; filter: drop-shadow(1px 1.500px 1px #000); }

/* status line and overlays */
.status { height: 27px; flex: none; display: flex; align-items: center; gap: 4px; padding-top: 2px; border-top: 1px solid #8a8f8a; border-bottom: 1px solid #e4e4e4; letter-spacing: .15px; }
.mark { position: absolute; left: 12px; top: 13px; width: 69px; height: 43px; border: 4px solid #fff; border-radius: 6px; background: rgba(225,225,225,.35); color: #fff; font: 900 14.500px/38px "Noto Sans", "Noto Sans CJK SC", sans-serif; text-align: center; letter-spacing: 0; }
.cursor { position: absolute; left: 86px; top: 253px; }
```
